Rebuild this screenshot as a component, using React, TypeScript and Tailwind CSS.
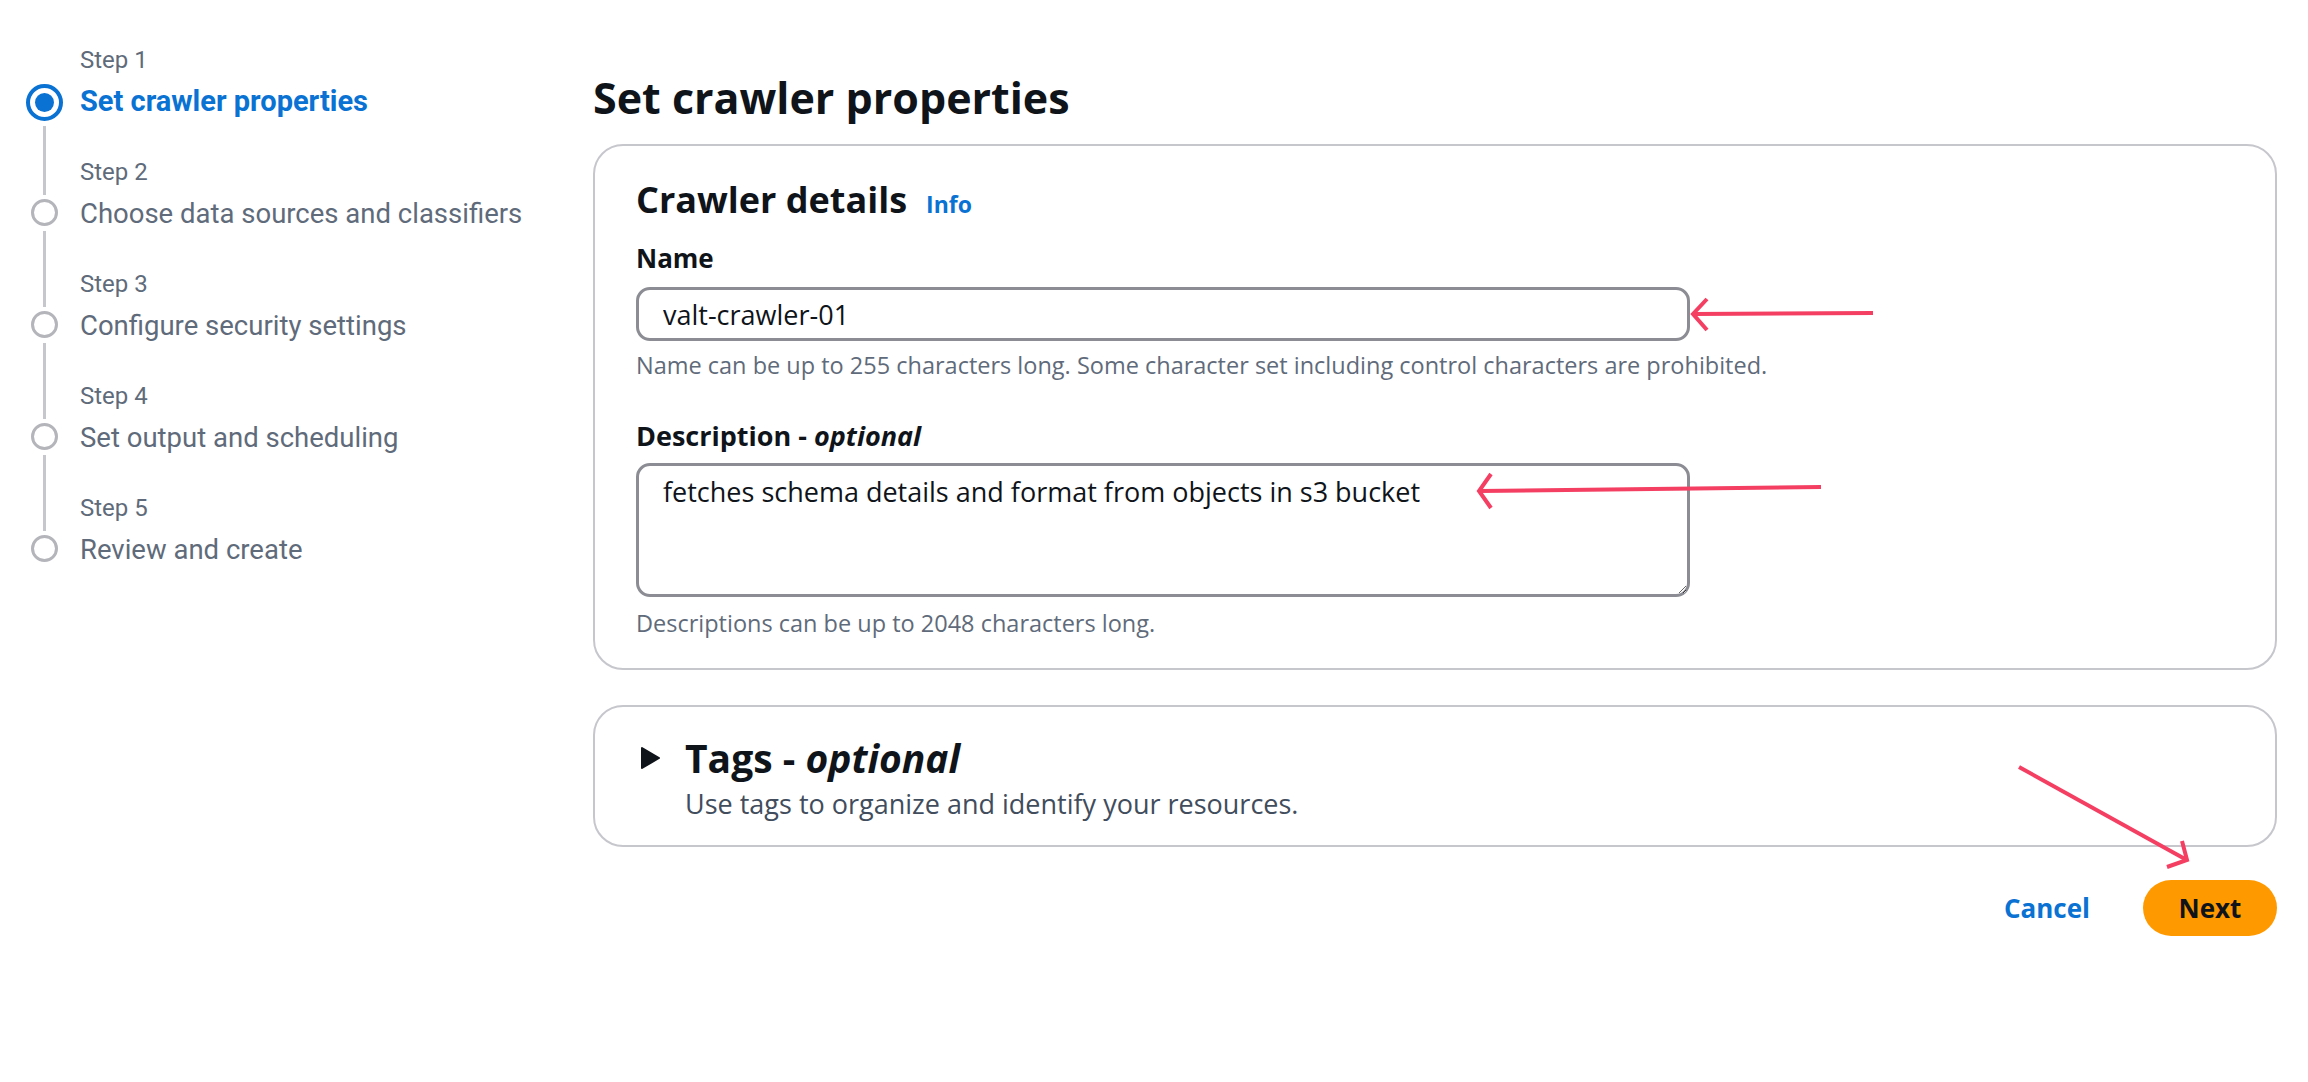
import { ReactNode } from "react";

const steps = [
  "Set crawler properties",
  "Choose data sources and classifiers",
  "Configure security settings",
  "Set output and scheduling",
  "Review and create",
];

const StepItem = ({ index, title }: { index: number; title: string }) => {
  const first = index === 0;
  const last = index === steps.length - 1;
  return (
    <div className="flex h-[112px] gap-[17px]">
      <div className="flex w-[38px] flex-col items-center">
        {first ? (
          <div className="h-[43.5px]" />
        ) : (
          <div className="h-[43px] w-[3px] bg-[#c6c6cd]" />
        )}
        {first ? (
          <div className="flex h-[37px] w-[37px] items-center justify-center rounded-full border-[4px] border-[#0972d3]">
            <div className="h-[19px] w-[19px] rounded-full bg-[#0972d3]" />
          </div>
        ) : (
          <div className="mt-[4px] h-[27px] w-[27px] rounded-full border-[3.5px] border-[#b4b4bb]" />
        )}
        {!last && <div className="mt-[5px] w-[3px] flex-1 bg-[#c6c6cd]" />}
      </div>
      <div className="flex flex-col">
        <div className="flex h-[40px] items-center text-[24px] text-[#5f6b7a]">
          Step {index + 1}
        </div>
        <div
          className={
            first
              ? "flex h-[44px] items-center text-[29px] font-bold text-[#0972d3]"
              : "flex h-[44px] items-center text-[27.5px] text-[#5f6b7a]"
          }
        >
          {title}
        </div>
      </div>
    </div>
  );
};

const Card = ({ children, className }: { children: ReactNode; className: string }) => (
  <div className={`rounded-[30px] border-2 border-[#c6c6cd] bg-white ${className}`}>{children}</div>
);

const Arrows = () => (
  <svg
    className="pointer-events-none absolute inset-0"
    width="2308"
    height="1082"
    fill="none"
    stroke="#f43f63"
    strokeWidth="4"
    strokeLinecap="butt"
  >
    <path d="M1873 313 L1694 314" />
    <path d="M1707 299 L1693 314 L1707 330" />
    <path d="M1821 487 L1480 491" />
    <path d="M1491 474 L1479 491 L1491 508" />
    <path d="M2019 767 L2185 859" />
    <path d="M2182 841 L2187 860 L2167 867" />
  </svg>
);

export default function App() {
  return (
    <div className="relative flex h-[1082px] w-[2308px] bg-white font-['Roboto','Liberation_Sans',sans-serif] text-[#000716]">
      <nav className="w-[593px] shrink-0 pl-[25px] pt-[40px]">
        {steps.map((s, i) => (
          <StepItem key={s} index={i} title={s} />
        ))}
      </nav>

      <main className="flex flex-1 flex-col pr-[31px] pt-[72px] font-['Open_Sans','Liberation_Sans',sans-serif]">
        <h1 className="mb-[20px] text-[43px] font-bold leading-[52px] text-[#0f141a]">
          Set crawler properties
        </h1>

        <Card className="h-[526px] px-[41px] pt-[32px]">
          <div className="flex items-baseline gap-[19px]">
            <h2 className="text-[36px] font-bold leading-[44px] text-[#0f141a]">Crawler details</h2>
            <span className="text-[23px] font-bold text-[#0972d3]">Info</span>
          </div>

          <label className="mt-[20px] block text-[26px] font-bold leading-[32px] text-[#0f141a]">
            Name
          </label>
          <input
            type="text"
            defaultValue="valt-crawler-01"
            className="mt-[13px] block h-[54px] w-[1054px] rounded-[14px] border-[3px] border-[#8c8c94] pl-[24px] text-[27px] text-[#0f141a] outline-none"
          />
          <p className="mt-[10px] text-[23.5px] leading-[28px] text-[#5f6b7a]">
            Name can be up to 255 characters long. Some character set including control characters are
            prohibited.
          </p>

          <label className="mt-[41px] block text-[27px] font-bold leading-[32px] text-[#0f141a]">
            Description - <i>optional</i>
          </label>
          <textarea
            defaultValue="fetches schema details and format from objects in s3 bucket"
            className="mt-[11px] block h-[134px] w-[1054px] resize-y rounded-[14px] border-[3px] border-[#8c8c94] px-[24px] pt-[10px] text-[27px] leading-[32px] text-[#0f141a] outline-none"
          />
          <p className="mt-[12px] text-[23.5px] leading-[28px] text-[#5f6b7a]">
            Descriptions can be up to 2048 characters long.
          </p>
        </Card>

        <Card className="mt-[35px] h-[142px] pl-[46px] pt-[29px]">
          <div className="flex h-[44px] items-center gap-[25px]">
            <svg width="19" height="22" viewBox="0 0 19 22">
              <path d="M1 1 L18 11 L1 21 Z" fill="#0f141a" stroke="#0f141a" strokeWidth="2" strokeLinejoin="round" />
            </svg>
            <span className="text-[39px] font-bold text-[#0f141a]">
              Tags - <i>optional</i>
            </span>
          </div>
          <p className="ml-[44px] mt-[8px] text-[27px] leading-[32px] text-[#414d5c]">
            Use tags to organize and identify your resources.
          </p>
        </Card>

        <div className="mt-[33px] flex items-center justify-end gap-[53px]">
          <button className="text-[26px] font-bold text-[#0972d3]">Cancel</button>
          <button className="h-[56px] w-[134px] rounded-full bg-[#ff9900] text-[26px] font-bold text-[#0f141a]">
            Next
          </button>
        </div>
      </main>

      <Arrows />
    </div>
  );
}
